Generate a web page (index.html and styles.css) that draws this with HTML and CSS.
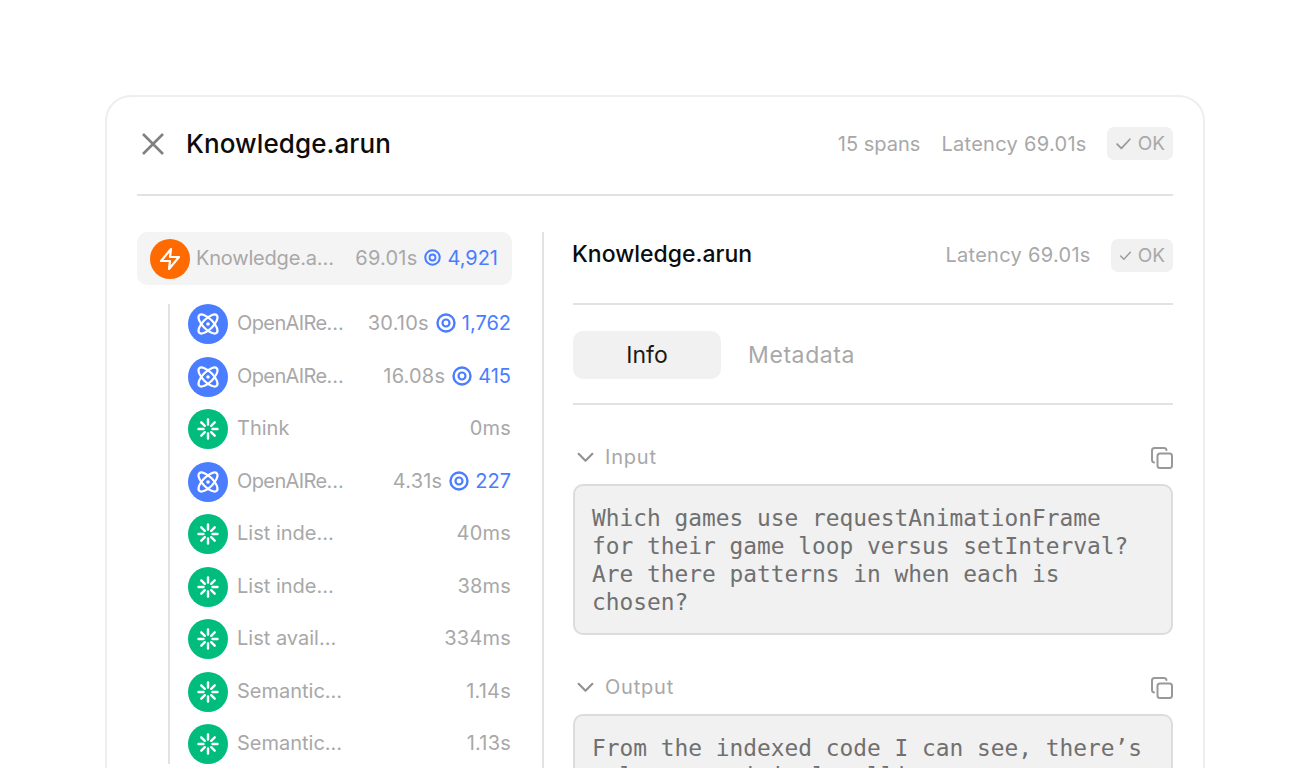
FILE: index.html
```html
<!DOCTYPE html>
<html lang="en">
<head>
<meta charset="utf-8">
<title>Knowledge.arun</title>
<link rel="stylesheet" href="styles.css">
</head>
<body>
<svg class="defs" width="0" height="0" aria-hidden="true">
  <symbol id="bolt" viewBox="0 0 24 24"><path d="M13 2 3 14h9l-1 8 10-12h-9l1-8Z" fill="none" stroke="currentColor" stroke-width="2.2" stroke-linejoin="round" stroke-linecap="round"/></symbol>
  <symbol id="atom" viewBox="0 0 24 24"><g fill="none" stroke="currentColor" stroke-width="2.2"><ellipse cx="12" cy="12" rx="12.4" ry="5.2" transform="rotate(45 12 12)"/><ellipse cx="12" cy="12" rx="12.4" ry="5.2" transform="rotate(-45 12 12)"/></g><circle cx="12" cy="12" r="1.800" fill="currentColor"/></symbol>
  <symbol id="spin" viewBox="0 0 24 24"><g stroke="currentColor" stroke-width="2.4" stroke-linecap="round"><path d="M12 2.500v5"/><path d="M12 16.500v5"/><path d="M2.500 12h5"/><path d="M16.500 12h5"/><path d="m5.300 5.300 3.500 3.500"/><path d="m15.200 15.200 3.500 3.500"/><path d="m5.300 18.700 3.500-3.500"/><path d="m15.200 8.800 3.500-3.500"/></g></symbol>
  <symbol id="target" viewBox="0 0 20 20"><circle cx="10" cy="10" r="8.500" fill="none" stroke="currentColor" stroke-width="2.400"/><circle cx="10" cy="10" r="3.500" fill="none" stroke="currentColor" stroke-width="2.200"/></symbol>
  <symbol id="check" viewBox="0 0 16 16"><path d="M2 8.500 6 12.500 14 4" fill="none" stroke="currentColor" stroke-width="1.700" stroke-linecap="round" stroke-linejoin="round"/></symbol>
  <symbol id="chev" viewBox="0 0 16 16"><path d="M1.500 4.500 8 11l6.500-6.500" fill="none" stroke="currentColor" stroke-width="2" stroke-linecap="round" stroke-linejoin="round"/></symbol>
  <symbol id="copy" viewBox="0 0 22 22"><rect x="6.500" y="6.500" width="14.500" height="14.500" rx="2.500" fill="none" stroke="currentColor" stroke-width="2"/><path d="M3 15.500c-1.200-.3-2-1.200-2-2.500V3.500C1 2 2 1 3.500 1H13c1.300 0 2.200.8 2.500 2" fill="none" stroke="currentColor" stroke-width="2" stroke-linecap="round"/></symbol>
</svg>
<main class="card">
  <header class="top">
    <svg class="close" viewBox="0 0 22 22" aria-hidden="true"><path d="M1 1l20 20M21 1 1 21" fill="none" stroke="currentColor" stroke-width="2.600"/></svg>
    <h1 class="title">Knowledge.arun</h1>
    <span class="muted spans">15 spans</span>
    <span class="muted">Latency 69.01s</span>
    <span class="badge"><svg class="check"><use href="#check"/></svg>OK</span>
  </header>
  <div class="columns">
    <section class="tree">
      <div class="row root">
        <span class="dot orange"><svg class="ico"><use href="#bolt"/></svg></span>
        <span class="name">Knowledge.a…</span>
        <span class="time">69.01s</span>
        <span class="tok"><svg class="tgt"><use href="#target"/></svg>4,921</span>
      </div>
      <div class="kids">
        <div class="row"><span class="dot blue"><svg class="ico"><use href="#atom"/></svg></span><span class="name tight">OpenAIRe…</span><span class="time">30.10s</span><span class="tok"><svg class="tgt big"><use href="#target"/></svg>1,762</span></div>
        <div class="row"><span class="dot blue"><svg class="ico"><use href="#atom"/></svg></span><span class="name tight">OpenAIRe…</span><span class="time">16.08s</span><span class="tok"><svg class="tgt big"><use href="#target"/></svg>415</span></div>
        <div class="row"><span class="dot green"><svg class="ico"><use href="#spin"/></svg></span><span class="name">Think</span><span class="time">0ms</span></div>
        <div class="row"><span class="dot blue"><svg class="ico"><use href="#atom"/></svg></span><span class="name tight">OpenAIRe…</span><span class="time">4.31s</span><span class="tok"><svg class="tgt big"><use href="#target"/></svg>227</span></div>
        <div class="row"><span class="dot green"><svg class="ico"><use href="#spin"/></svg></span><span class="name">List inde…</span><span class="time">40ms</span></div>
        <div class="row"><span class="dot green"><svg class="ico"><use href="#spin"/></svg></span><span class="name">List inde…</span><span class="time">38ms</span></div>
        <div class="row"><span class="dot green"><svg class="ico"><use href="#spin"/></svg></span><span class="name">List avail…</span><span class="time">334ms</span></div>
        <div class="row"><span class="dot green"><svg class="ico"><use href="#spin"/></svg></span><span class="name">Semantic…</span><span class="time">1.14s</span></div>
        <div class="row"><span class="dot green"><svg class="ico"><use href="#spin"/></svg></span><span class="name">Semantic…</span><span class="time">1.13s</span></div>
      </div>
    </section>
    <section class="detail">
      <div class="dhead">
        <h2 class="dtitle">Knowledge.arun</h2>
        <span class="muted">Latency 69.01s</span>
        <span class="badge small"><svg class="check"><use href="#check"/></svg>OK</span>
      </div>
      <div class="tabs">
        <span class="tab active">Info</span>
        <span class="tab meta">Metadata</span>
      </div>
      <div class="sechead"><svg class="chev"><use href="#chev"/></svg><span class="label">Input</span><svg class="copy"><use href="#copy"/></svg></div>
      <pre class="code">Which games use requestAnimationFrame
for their game loop versus setInterval?
Are there patterns in when each is
chosen?</pre>
      <div class="sechead"><svg class="chev"><use href="#chev"/></svg><span class="label">Output</span><svg class="copy"><use href="#copy"/></svg></div>
      <pre class="code">From the indexed code I can see, there’s
only one original polling</pre>
    </section>
  </div>
</main>
</body>
</html>
```
FILE: styles.css
```css
* { box-sizing: border-box; }
html, body { margin: 0; height: 768px; overflow: hidden; background: #fff; }
body { padding: 95px 0 0 105px; font-family: Inter, "Liberation Sans", sans-serif; color: #a8a8a8; font-size: 20px; }
.defs { position: absolute; }
.card { width: 1100px; height: 900px; border: 2px solid #eeeeee; border-radius: 26px; padding: 0 30px; }
.top { display: flex; align-items: center; height: 99px; padding-bottom: 4px; border-bottom: 2px solid #e2e2e2; }
.close { width: 22px; height: 22px; color: #808080; margin: 0 22px 0 5px; flex: none; }
.title { margin: 0 auto 0 0; font-size: 26px; font-weight: 500; color: #0c0c0c; line-height: 32px; letter-spacing: .1px; }
.muted { font-size: 20px; color: #a8a8a8; line-height: 24px; letter-spacing: .3px; }
.spans { margin-right: 21px; letter-spacing: 0; }
.badge { display: flex; align-items: center; gap: 6px; height: 33px; padding: 0 8px; margin-left: 20px; background: #f1f1f1; border-radius: 7px; font-size: 19px; color: #a8a8a8; }
.check { width: 17px; height: 17px; color: #999; }
.small .check { width: 13px; height: 13px; }
.columns { display: flex; padding-top: 36px; }
.tree { width: 375px; flex: none; }
.row { display: flex; align-items: center; height: 40px; padding-right: 1px; }
.root { height: 53px; background: #f4f4f4; border-radius: 10px; padding: 0 14px 0 13px; }
.dot { width: 40px; height: 40px; border-radius: 50%; flex: none; display: flex; align-items: center; justify-content: center; color: #fff; }
.ico { width: 24px; height: 24px; }
.orange { background: #ff6b00; }
.blue { background: #4a7dff; }
.green { background: #00bd7d; }
.name { margin: 0 auto 2px 9px; white-space: nowrap; line-height: 24px; }
.tight { letter-spacing: -.6px; }
.root .name { margin-left: 6px; letter-spacing: -.2px; }
.time { margin-bottom: 2px; white-space: nowrap; line-height: 24px; letter-spacing: .2px; }
.tok { display: flex; align-items: center; gap: 6px; margin: 0 0 2px 7px; color: #4a7dff; line-height: 24px; }
.tgt { width: 17px; height: 17px; }
.tgt.big { width: 20px; height: 20px; }
.kids { margin: 19px 0 0 31px; padding-left: 18px; border-left: 2px solid #e2e2e2; display: flex; flex-direction: column; gap: 12.5px; }
.detail { flex: 1; margin-left: 30px; border-left: 2px solid #e2e2e2; padding-left: 29px; }
.dhead { display: flex; align-items: center; height: 73px; padding-bottom: 25px; border-bottom: 2px solid #e2e2e2; }
.dtitle { margin: 0 auto 3px -1px; font-size: 23px; font-weight: 500; color: #0c0c0c; line-height: 30px; }
.tabs { display: flex; margin-top: 26px; height: 74px; border-bottom: 2px solid #e2e2e2; padding-bottom: 25px; }
.tab { width: 148px; height: 48px; padding-bottom: 1px; display: flex; align-items: center; justify-content: center; font-size: 23px; border-radius: 10px; color: #a8a8a8; }
.tab.active { background: #f1f1f1; color: #1a1a1a; }
.tab.meta { width: auto; margin-left: 27px; letter-spacing: .6px; }
.sechead { display: flex; align-items: center; height: 22px; margin-top: 41px; margin-bottom: 16px; }
.chev { width: 17px; height: 17px; color: #919191; margin-left: 4px; }
.label { margin-left: 11px; margin-right: auto; font-size: 20px; letter-spacing: .8px; }
.copy { width: 22px; height: 22px; margin-top: 2px; color: #999; }
.code { margin: 0; border: 2px solid #dcdcdc; border-radius: 10px; background: #f1f1f1; padding: 18px 17px; font-family: "DejaVu Sans Mono", monospace; font-size: 22.85px; line-height: 28px; color: #707070; white-space: pre; overflow: hidden; height: 151px; }
```
